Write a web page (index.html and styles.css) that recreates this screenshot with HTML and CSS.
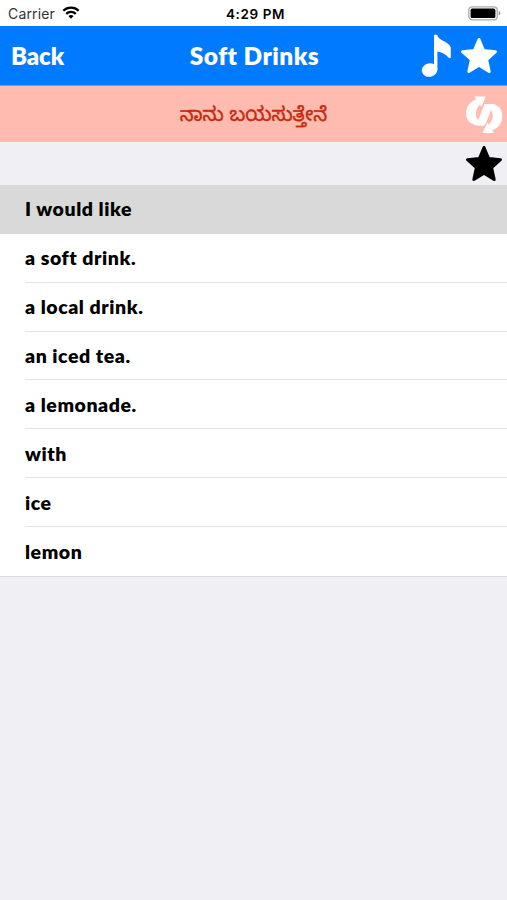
FILE: index.html
```html
<!DOCTYPE html>
<html lang="en">
<head>
<meta charset="utf-8">
<title>Soft Drinks</title>
<link rel="stylesheet" href="styles.css">
</head>
<body>
<div class="status">
  <div class="carrier"><span>Carrier</span>
    <svg class="wifi" width="18" height="13" viewBox="0 0 18 13"><g fill="none" stroke="#000" stroke-width="2.3"><path d="M1.3 4.8a11 11 0 0 1 15.4 0"/><path d="M4.2 7.9a6.9 6.9 0 0 1 9.6 0"/></g><path d="M6.4 10.1a3.8 3.8 0 0 1 5.2 0L9 12.7z"/></svg>
  </div>
  <time class="time">4:29 PM</time>
  <svg class="battery" width="33" height="15" viewBox="0 0 33 15"><rect x=".8" y=".8" width="28.4" height="13" rx="3.4" fill="#fff" stroke="#aaa" stroke-width="1.3"/><rect x="2.6" y="2.6" width="24.8" height="9.4" rx="1.6"/><path d="M30.6 5.1q1.7.5 1.7 2.2t-1.7 2.2z" fill="#999"/></svg>
</div>
<header class="nav">
  <a class="back">Back</a>
  <h1 class="title">Soft Drinks</h1>
  <div class="actions">
    <svg width="31" height="44" viewBox="0 0 31 44" fill="#fff"><ellipse cx="8.6" cy="36.1" rx="7.8" ry="6.7" transform="rotate(-12 8.6 36.1)"/><path d="M13 1.2Q14.7-.4 16.4 1.2Q16.9 4.5 23.500 7.5Q29 10.500 29.800 13.500V23.500Q28.800 25 27.500 23.500Q23 18.600 16.400 17.500V36H13z"/></svg>
    <svg width="38" height="38" viewBox="0 0 38 38"><path d="M19 2.5L23.6 13.5L35.5 14.7L26.6 22.5L29.2 34.5L19 28.2L8.8 34.5L11.4 22.5L2.5 14.7L14.4 13.5z" fill="#fff" stroke="#fff" stroke-width="3" stroke-linejoin="round"/></svg>
  </div>
</header>
<section class="phrase">
  <p class="translation" lang="kn">ನಾನು ಬಯಸುತ್ತೇನೆ</p>
  <svg class="swap" width="38" height="39" viewBox="0 0 38 39" fill="#fff"><path d="M9.500 1.500H20.700L16.500 11.800L14.800 9.800C10.200 14.500 9.800 20.500 13 25.500L19.500 9H26.800L18.300 28.500Q17.300 30.500 14.800 30.500H12C5.500 29.800 1 24.500 1 18.300C1 11.900 5 6.500 11.200 4.300z"/><path d="M27.800 9C33.800 10.200 37.300 14.800 37.300 21C37.300 27.600 33.600 33 27.400 35.200L29 38H17.700L22.200 27.500L23.700 29.800C28.400 25 28.800 19.500 26 15L21.300 27.200L18.800 31H15.500L24.800 9z"/></svg>
</section>
<div class="favorite">
  <svg width="38" height="38" viewBox="0 0 38 38"><path d="M19 2.5L23.6 13.5L35.5 14.7L26.6 22.5L29.2 34.5L19 28.2L8.8 34.5L11.4 22.5L2.5 14.7L14.4 13.5z" stroke="#000" stroke-width="3" stroke-linejoin="round"/></svg>
</div>
<ul class="list">
  <li class="row selected">I would like</li>
  <li class="row">a soft drink.</li>
  <li class="row">a local drink.</li>
  <li class="row">an iced tea.</li>
  <li class="row">a lemonade.</li>
  <li class="row">with</li>
  <li class="row">ice</li>
  <li class="row">lemon</li>
</ul>
</body>
</html>
```
FILE: styles.css
```css
* { box-sizing: border-box; }
body { margin: 0; min-height: 900px; background: #efeff4; color: #000; font-family: Lato, sans-serif; }
h1, p, ul { margin: 0; padding: 0; }
svg { display: block; flex: none; }
.status { height: 25.5px; background: #fff; display: grid; grid-template-columns: 1fr auto 1fr; align-items: center; padding: 2px 6px 0 8px; font: 14px/20px Inter, sans-serif; }
.carrier { display: flex; align-items: center; gap: 7px; color: #333; letter-spacing: .15px; }
.wifi { margin-top: -2px; }
.time { font-size: 13.5px; font-weight: 600; letter-spacing: .6px; padding-left: 2px; }
.battery { justify-self: end; }
.nav { height: 60.5px; background: #007aff; color: #fff; display: grid; grid-template-columns: 1fr auto 1fr; align-items: center; padding: 0 9px 0 11px; border-bottom: 1px solid #6c9fe0; font-weight: 800; }
.back { font-size: 24px; letter-spacing: -.1px; }
.title { font-size: 24.5px; font-weight: 800; letter-spacing: .45px; }
.actions { display: flex; align-items: center; justify-content: flex-end; gap: 8px; padding-top: 1px; }
.phrase { height: 56px; background: #ffbbb0; display: grid; grid-template-columns: 1fr auto 1fr; align-items: center; padding-right: 4px; }
.translation { grid-column: 2; padding: 9px 0 0 4px; color: #c42a0b; font: 19.7px/30px "Noto Sans Kannada", "Noto Sans", sans-serif; -webkit-text-stroke: .4px #c42a0b; }
.swap { justify-self: end; }
.favorite { height: 43px; display: flex; justify-content: flex-end; align-items: center; padding-right: 4px; }
.list { list-style: none; background: #fff; border-bottom: 1px solid #dcdce0; }
.row { height: 48.87px; display: flex; align-items: center; margin-left: 25px; border-bottom: 1px solid #e4e4e6; font-size: 19.5px; font-weight: 800; letter-spacing: .55px; }
.selected { margin-left: 0; padding-left: 25px; background: #d9d9d9; border-color: #d9d9d9; }
.row:last-child { border-bottom: 0; }
```
